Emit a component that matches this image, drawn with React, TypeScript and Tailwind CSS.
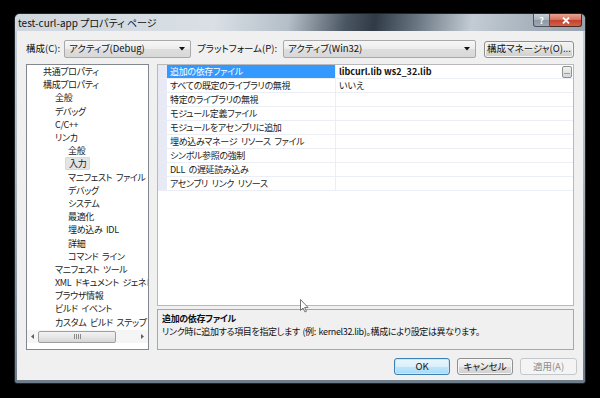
import React from "react";

const FONT = "font-['Noto_Sans_CJK_JP','Noto_Sans',sans-serif] [font-feature-settings:'palt']";

const tree: { t: string; lvl: 0 | 1 | 2; sel?: boolean }[] = [
  { t: "共通プロパティ", lvl: 0 },
  { t: "構成プロパティ", lvl: 0 },
  { t: "全般", lvl: 1 },
  { t: "デバッグ", lvl: 1 },
  { t: "C/C++", lvl: 1 },
  { t: "リンカ", lvl: 1 },
  { t: "全般", lvl: 2 },
  { t: "入力", lvl: 2, sel: true },
  { t: "マニフェスト ファイル", lvl: 2 },
  { t: "デバッグ", lvl: 2 },
  { t: "システム", lvl: 2 },
  { t: "最適化", lvl: 2 },
  { t: "埋め込み IDL", lvl: 2 },
  { t: "詳細", lvl: 2 },
  { t: "コマンド ライン", lvl: 2 },
  { t: "マニフェスト ツール", lvl: 1 },
  { t: "XML ドキュメント ジェネレータ", lvl: 1 },
  { t: "ブラウザ情報", lvl: 1 },
  { t: "ビルド イベント", lvl: 1 },
  { t: "カスタム ビルド ステップ", lvl: 1 },
];

const indent = ["pl-[16px]", "pl-[28px]", "pl-[41px]"];

const rows: { name: string; value?: string; bold?: boolean }[] = [
  { name: "追加の依存ファイル", value: "libcurl.lib ws2_32.lib", bold: true },
  { name: "すべての既定のライブラリの無視", value: "いいえ" },
  { name: "特定のライブラリの無視" },
  { name: "モジュール定義ファイル" },
  { name: "モジュールをアセンブリに追加" },
  { name: "埋め込みマネージ リソース ファイル" },
  { name: "シンボル参照の強制" },
  { name: "DLL の遅延読み込み" },
  { name: "アセンブリ リンク リソース" },
];

function Combo({ text, w }: { text: string; w: string }) {
  return (
    <div
      className={`${w} h-[18px] flex items-center rounded-[2px] border border-[#a9a9a9] bg-[linear-gradient(to_bottom,#f7f7f7_0%,#ececec_50%,#dedede_51%,#d8d8d8_100%)] pl-[4px] pr-[5px]`}
    >
      <span className="flex-1 text-[9.5px] leading-none text-[#111] whitespace-nowrap">{text}</span>
      <svg width="6" height="4" viewBox="0 0 6 4" className="shrink-0">
        <polygon points="0,0 6,0 3,3.5" fill="#111" />
      </svg>
    </div>
  );
}

function Btn({
  text,
  w,
  kind = "normal",
}: {
  text: string;
  w: string;
  kind?: "normal" | "default" | "disabled";
}) {
  const cls =
    kind === "default"
      ? "border-[#3c7fb1] bg-[linear-gradient(to_bottom,#eaf6fd_0%,#d9f0fc_50%,#bee6fd_51%,#a7d9f5_100%)] text-[#111] shadow-[inset_0_0_0_1px_#cbe6f7]"
      : kind === "disabled"
      ? "border-[#c5c8ca] bg-[#f4f4f4] text-[#8d8d8d]"
      : "border-[#8e8f8f] bg-[linear-gradient(to_bottom,#f2f2f2_0%,#ebebeb_50%,#dddddd_51%,#cfcfcf_100%)] text-[#111] shadow-[inset_0_0_0_1px_#f6f6f6]";
  return (
    <div
      className={`${w} h-[17px] rounded-[3px] border flex items-center justify-center text-[9.5px] leading-none whitespace-nowrap ${cls}`}
    >
      {text}
    </div>
  );
}

export default function App() {
  return (
    <div className={`relative w-[600px] h-[398px] bg-black overflow-hidden pt-[13px] pl-[14px] ${FONT}`}>
      {/* Window */}
      <div className="w-[572px] h-[371px] flex flex-col rounded-t-[6px] rounded-b-[3px] border border-[#1d242b] bg-[linear-gradient(to_bottom,#c9d1d9_0%,#aeb8c2_40%,#6f7d8b_100%)] overflow-hidden">
        {/* Title bar */}
        <div className="h-[17px] shrink-0 flex items-start bg-[linear-gradient(100deg,#cfd6dd_0%,#d9dfe5_35%,#b4bec8_48%,#4a5662_58%,#2f3a45_63%,#66737f_70%,#c3ccd4_80%,#a9b3bd_90%,#98a3ad_100%)]">
          <span className="pl-[3px] pt-[3px] text-[10px] leading-[11px] text-[#111] whitespace-nowrap">
            test-curl-app プロパティ ページ
          </span>
          <div className="ml-auto mr-[3px] flex">
            <div className="w-[17px] h-[13px] rounded-bl-[3px] border border-t-0 border-[#4b545c] bg-[linear-gradient(to_bottom,#c6ced6_0%,#a9b3bc_50%,#8d98a3_51%,#9ea9b3_100%)] flex items-center justify-center text-[9px] font-bold leading-none text-white">
              ?
            </div>
            <div className="w-[32px] h-[13px] rounded-br-[3px] border border-t-0 border-l-0 border-[#4b2a25] bg-[linear-gradient(to_bottom,#e6a493_0%,#d7705d_50%,#c2412c_51%,#d3614b_100%)] flex items-center justify-center">
              <svg width="8" height="7" viewBox="0 0 8 7">
                <path d="M1 0.5 L7 6.5 M7 0.5 L1 6.5" stroke="#fff" strokeWidth="1.8" />
              </svg>
            </div>
          </div>
        </div>

        {/* Client area */}
        <div className="flex-1 mx-[2px] mb-[3px] bg-[#f0f0f0] flex flex-col pt-[9px] pl-[9px] pr-[9px]">
          {/* Row 1 */}
          <div className="h-[18px] flex items-center text-[9.5px] leading-none text-[#111]">
            <span className="w-[38px] whitespace-nowrap">構成(C):</span>
            <Combo text="アクティブ(Debug)" w="w-[127px]" />
            <span className="ml-[6px] w-[86px] whitespace-nowrap">プラットフォーム(P):</span>
            <Combo text="アクティブ(Win32)" w="w-[193px]" />
            <div className="ml-auto">
              <Btn text="構成マネージャ(O)..." w="w-[90px]" />
            </div>
          </div>

          {/* Body */}
          <div className="mt-[6px] h-[286px] flex gap-[8px]">
            {/* Tree */}
            <div className="w-[123px] h-full border border-[#828790] bg-white flex flex-col overflow-hidden">
              <div className="flex-1">
                {tree.map((it, i) => (
                  <div
                    key={i}
                    className={`h-[13.2px] flex items-center whitespace-nowrap text-[9px] tracking-[-0.35px] [word-spacing:2px] leading-none text-[#1a1a1a] ${indent[it.lvl]}`}
                  >
                    {it.sel ? (
                      <span className="-ml-[3px] px-[3px] h-[13px] flex items-center rounded-[1px] bg-[#e4e4e4] border border-[#d9d9d9]">
                        {it.t}
                      </span>
                    ) : (
                      it.t
                    )}
                  </div>
                ))}
              </div>
              {/* horizontal scrollbar */}
              <div className="h-[13px] mb-[6px] flex items-center bg-[#f5f5f5]">
                <div className="w-[11px] flex items-center justify-center">
                  <svg width="3" height="5" viewBox="0 0 3 5">
                    <polygon points="3,0 3,5 0,2.5" fill="#606060" />
                  </svg>
                </div>
                <div className="w-[78px] h-[12px] rounded-[2px] border border-[#9e9e9e] bg-[linear-gradient(to_bottom,#f3f3f3_0%,#e6e6e6_50%,#d6d6d6_100%)] flex items-center justify-center">
                  <div className="flex gap-[1px]">
                    <div className="w-[1px] h-[5px] bg-[#8a8a8a]" />
                    <div className="w-[1px] h-[5px] bg-[#8a8a8a]" />
                    <div className="w-[1px] h-[5px] bg-[#8a8a8a]" />
                    <div className="w-[1px] h-[5px] bg-[#8a8a8a]" />
                  </div>
                </div>
                <div className="flex-1" />
                <div className="w-[11px] flex items-center justify-center">
                  <svg width="3" height="5" viewBox="0 0 3 5">
                    <polygon points="0,0 0,5 3,2.5" fill="#606060" />
                  </svg>
                </div>
              </div>
            </div>

            {/* Right side */}
            <div className="flex-1 flex flex-col">
              {/* Property grid */}
              <div className="h-[242px] border border-[#b9b9b9] bg-white flex flex-col">
                {rows.map((r, i) => (
                  <div key={i} className="h-[14px] flex border-b border-[#eceef6]">
                    <div className="w-[9px] bg-[#e7eaf5]" />
                    <div
                      className={`w-[169px] flex items-center pl-[3px] whitespace-nowrap overflow-hidden text-[9px] tracking-[-0.35px] [word-spacing:2px] leading-none border-r border-[#eceef6] ${
                        i === 0 ? "bg-[#3399ff] text-white" : "text-[#1a1a1a]"
                      }`}
                    >
                      {r.name}
                    </div>
                    <div className="flex-1 flex items-center pl-[3px] pr-[1px]">
                      <span
                        className={`flex-1 whitespace-nowrap text-[9px] leading-none text-[#111] ${
                          r.bold ? "font-bold" : ""
                        }`}
                      >
                        {r.value ?? ""}
                      </span>
                      {i === 0 && (
                        <div className="w-[10px] h-[12px] rounded-[2px] border border-[#8e8f8f] bg-[linear-gradient(to_bottom,#f2f2f2,#d6d6d6)] flex items-end justify-center pb-[2px]">
                          <span className="text-[7px] leading-none text-[#222]">...</span>
                        </div>
                      )}
                    </div>
                  </div>
                ))}
              </div>
              {/* Description */}
              <div className="mt-[3px] h-[41px] border border-[#a7a7a7] bg-[#f0f0f0] pl-[4px] pt-[2px] text-[9px] tracking-[-0.35px] [word-spacing:1px] text-[#111]">
                <div className="h-[13px] flex items-center font-bold leading-none">追加の依存ファイル</div>
                <div className="h-[13px] flex items-center leading-none whitespace-nowrap">
                  リンク時に追加する項目を指定します (例: kernel32.lib)。構成により設定は異なります。
                </div>
              </div>
            </div>
          </div>

          {/* Buttons */}
          <div className="mt-[8px] -mr-[3px] flex justify-end gap-[7px]">
            <Btn text="OK" w="w-[56px]" kind="default" />
            <Btn text="キャンセル" w="w-[56px]" />
            <Btn text="適用(A)" w="w-[57px]" kind="disabled" />
          </div>
        </div>
      </div>

      {/* Mouse cursor */}
      <svg
        className="absolute left-[300px] top-[299px]"
        width="9"
        height="14"
        viewBox="0 0 9 14"
      >
        <polygon
          points="0.5,0.5 0.5,11.5 3,9 5,13 6.5,12.3 4.6,8.5 8,8.5"
          fill="#fff"
          stroke="#555"
          strokeWidth="0.8"
        />
      </svg>
    </div>
  );
}
